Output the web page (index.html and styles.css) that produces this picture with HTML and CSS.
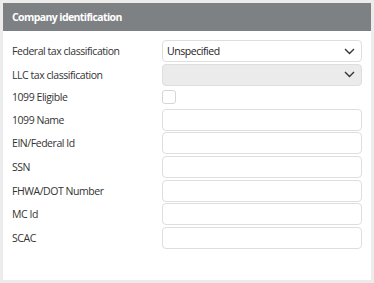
FILE: index.html
```html
<!DOCTYPE html>
<html>
<head>
<meta charset="utf-8">
<link rel="stylesheet" href="styles.css">
</head>
<body>
<div class="panel">
  <div class="panel-header">Company identification</div>
  <div class="panel-body">
    <div class="row">
      <label class="label">Federal tax classification</label>
      <div class="select">
        <span class="select-text">Unspecified</span>
        <svg class="chev" width="11" height="7" viewBox="0 0 11 7"><path d="M1 1 L5.5 5.5 L10 1" fill="none" stroke="#333" stroke-width="1.4"/></svg>
      </div>
    </div>
    <div class="row">
      <label class="label">LLC tax classification</label>
      <div class="select disabled">
        <span class="select-text"></span>
        <svg class="chev" width="11" height="7" viewBox="0 0 11 7"><path d="M1 1 L5.5 5.5 L10 1" fill="none" stroke="#333" stroke-width="1.4"/></svg>
      </div>
    </div>
    <div class="row row-check">
      <label class="label">1099 Eligible</label>
      <div class="checkbox"></div>
    </div>
    <div class="row">
      <label class="label">1099 Name</label>
      <div class="input"></div>
    </div>
    <div class="row">
      <label class="label">EIN/Federal Id</label>
      <div class="input"></div>
    </div>
    <div class="row">
      <label class="label">SSN</label>
      <div class="input"></div>
    </div>
    <div class="row">
      <label class="label">FHWA/DOT Number</label>
      <div class="input"></div>
    </div>
    <div class="row">
      <label class="label">MC Id</label>
      <div class="input"></div>
    </div>
    <div class="row">
      <label class="label">SCAC</label>
      <div class="input"></div>
    </div>
  </div>
</div>
</body>
</html>
```

FILE: styles.css
```css
html, body {
  margin: 0;
  padding: 0;
  background: #ececec;
  width: 374px;
  height: 283px;
  overflow: hidden;
}
body {
  padding: 3px;
  box-sizing: border-box;
  font-family: "Open Sans", "Noto Sans", sans-serif;
}
.panel {
  width: 368px;
  height: 277px;
  background: #ffffff;
}
.panel-header {
  height: 28px;
  background: #7e8184;
  color: #ffffff;
  font-weight: bold;
  font-size: 10.5px;
  letter-spacing: -0.6px;
  line-height: 28px;
  padding-left: 9px;
}
.panel-body {
  padding: 9px 9px 0 9px;
  display: flex;
  flex-direction: column;
  gap: 1.6px;
}
.row {
  display: grid;
  grid-template-columns: 150px 200px;
  align-items: center;
  height: 22px;
}
.row-check {
  height: 20px;
}
.label {
  font-size: 10.5px;
  letter-spacing: -0.45px;
  color: #333333;
}
.select, .input {
  box-sizing: border-box;
  height: 22px;
  border: 1px solid #dedede;
  border-radius: 4px;
  background: #ffffff;
}
.select {
  display: flex;
  align-items: center;
  justify-content: space-between;
  padding: 0 5px 0 4px;
}
.select.disabled {
  background: #ebebeb;
}
.select-text {
  font-size: 10.5px;
  letter-spacing: -0.45px;
  color: #222222;
}
.chev {
  display: block;
  margin-right: 1px;
}
.checkbox {
  box-sizing: border-box;
  width: 14px;
  height: 14px;
  border: 1px solid #d6d6d6;
  border-radius: 3px;
  background: #ffffff;
}
```
